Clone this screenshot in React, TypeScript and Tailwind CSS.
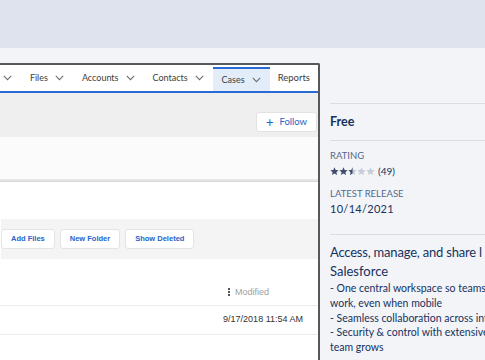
import React from "react";

const font = { fontFamily: 'Lato, "Open Sans", sans-serif' };

function Chevron() {
  return (
    <svg width="9" height="6" viewBox="0 0 9 6" className="shrink-0">
      <path d="M0.8 0.9 L4.5 4.6 L8.2 0.9" fill="none" stroke="#706e6b" strokeWidth="1.1" />
    </svg>
  );
}

function Star({ fill }: { fill: "full" | "half" | "empty" }) {
  const dark = "#3e4c6b";
  const light = "#c6ccd6";
  const d = "M5 0.4 L6.3 3.4 L9.6 3.6 L7.1 5.8 L7.9 9 L5 7.3 L2.1 9 L2.9 5.8 L0.4 3.6 L3.7 3.4 Z";
  return (
    <svg width="9" height="9" viewBox="0 0 10 10">
      <defs>
        <clipPath id="halfclip">
          <rect x="0" y="0" width="5" height="10" />
        </clipPath>
      </defs>
      <path d={d} fill={fill === "full" ? dark : light} />
      {fill === "half" && <path d={d} fill={dark} clipPath="url(#halfclip)" />}
    </svg>
  );
}

export default function App() {
  const tabs = ["Chatter", "Files", "Accounts", "Contacts", "Cases"];

  return (
    <div className="w-[485px] h-[360px] overflow-hidden bg-[#f3f4f8] flex flex-col" style={font}>
      <div className="h-[48px] shrink-0 bg-[#dfe3ee]" />

      <div className="flex flex-1 min-h-0">
        {/* app screenshot */}
        <div className="w-[320px] shrink-0 mt-[15px] border-t-2 border-r-2 border-[#58585a] rounded-tr-[2px] bg-white flex flex-col overflow-hidden">
          <nav className="h-[28px] shrink-0 flex justify-end items-stretch overflow-hidden border-b-2 border-[#2a6ad6] pr-[8px] text-[9px] text-[#3e3e3c]">
            {tabs.map((t) => {
              const active = t === "Cases";
              return (
                <div
                  key={t}
                  className={
                    active
                      ? "shrink-0 flex items-center gap-[7px] px-[9px] mt-[2px] bg-[#e3edf9] border-t-[2px] border-[#2a6ad6]"
                      : "shrink-0 flex items-center gap-[7px] px-[9px]"
                  }
                >
                  <span>{t}</span>
                  <Chevron />
                </div>
              );
            })}
            <div className="shrink-0 flex items-center pl-[8px] text-[9.5px]">Reports</div>
          </nav>

          <div className="h-[44px] shrink-0 bg-[#efefef] flex items-end justify-end pb-[5px] pr-[1px]">
            <button className="h-[20px] w-[61px] flex items-center justify-center gap-[6px] bg-white border border-[#e2e2e2] rounded-[3px] text-[9.5px] text-[#1b64c7]">
              <span className="text-[13px] leading-none">+</span>
              <span>Follow</span>
            </button>
          </div>

          <div className="h-[42px] shrink-0 bg-[#fbfbfb]" />
          <div className="h-[3px] shrink-0 bg-[#e6e6e6] border-b border-[#d6d6d6]" />
          <div className="h-[37px] shrink-0 bg-white" />

          <div className="h-[40px] shrink-0 bg-[#f4f4f4] flex items-center gap-[5px] ml-[1px]">
            {["Add Files", "New Folder", "Show Deleted"].map((b) => (
              <button
                key={b}
                className="h-[20px] px-[9px] bg-white border border-[#e4e4e4] rounded-[3px] text-[7.5px] font-bold text-[#2563c9]"
                style={{ fontFamily: '"Liberation Sans", sans-serif' }}
              >
                {b}
              </button>
            ))}
          </div>

          <div className="h-[47px] shrink-0 bg-white flex items-end justify-end pr-[49px] pb-[6px] border-b border-[#ececec]">
            <div
              className="flex items-center gap-[5px] text-[9px] text-[#a0a0a0]"
              style={{ fontFamily: '"Liberation Sans", sans-serif' }}
            >
              <span className="flex flex-col gap-[1px]">
                <span className="w-[2px] h-[2px] bg-[#555]" />
                <span className="w-[2px] h-[2px] bg-[#555]" />
                <span className="w-[2px] h-[2px] bg-[#555]" />
              </span>
              <span>Modified</span>
            </div>
          </div>

          <div
            className="h-[29px] shrink-0 bg-white flex items-center justify-end pr-[15px] border-b border-[#ececec] text-[9px] text-[#333]"
            style={{ fontFamily: '"Liberation Sans", sans-serif' }}
          >
            9/17/2018 11:54 AM
          </div>
          <div className="flex-1 bg-white" />
        </div>

        {/* listing detail */}
        <div className="ml-[10px] flex-1 min-w-0 pt-[55px] text-[#16325c] whitespace-nowrap overflow-hidden">
          <div className="border-t border-[#d8dde6] border-b h-[38px] flex items-center text-[12.5px] font-bold">
            Free
          </div>
          <div className="pt-[9px]">
            <div className="text-[9.5px] leading-[12px] text-[#54698d]">RATING</div>
            <div className="flex items-center mt-[2px]">
              <Star fill="full" />
              <Star fill="full" />
              <Star fill="half" />
              <Star fill="empty" />
              <Star fill="empty" />
              <span className="ml-[3px] text-[10px] text-[#16325c]">(49)</span>
            </div>
            <div className="mt-[9px] text-[9.5px] leading-[12px] text-[#54698d]">LATEST RELEASE</div>
            <div className="mt-[2px] text-[11px] leading-[14px] tracking-[0.3px]">10/14/2021</div>
          </div>
          <div className="mt-[18px] border-t border-[#d8dde6] pt-[8px]">
            <div className="text-[13px] leading-[19px] tracking-[-0.2px]">Access, manage, and share l</div>
            <div className="text-[13px] leading-[19px]">Salesforce</div>
            <div className="text-[10.5px] leading-[14.8px]">
              <div>- One central workspace so teams</div>
              <div>work, even when mobile</div>
              <div>- Seamless collaboration across int</div>
              <div>- Security &amp; control with extensive</div>
              <div>team grows</div>
            </div>
          </div>
        </div>
      </div>
    </div>
  );
}
